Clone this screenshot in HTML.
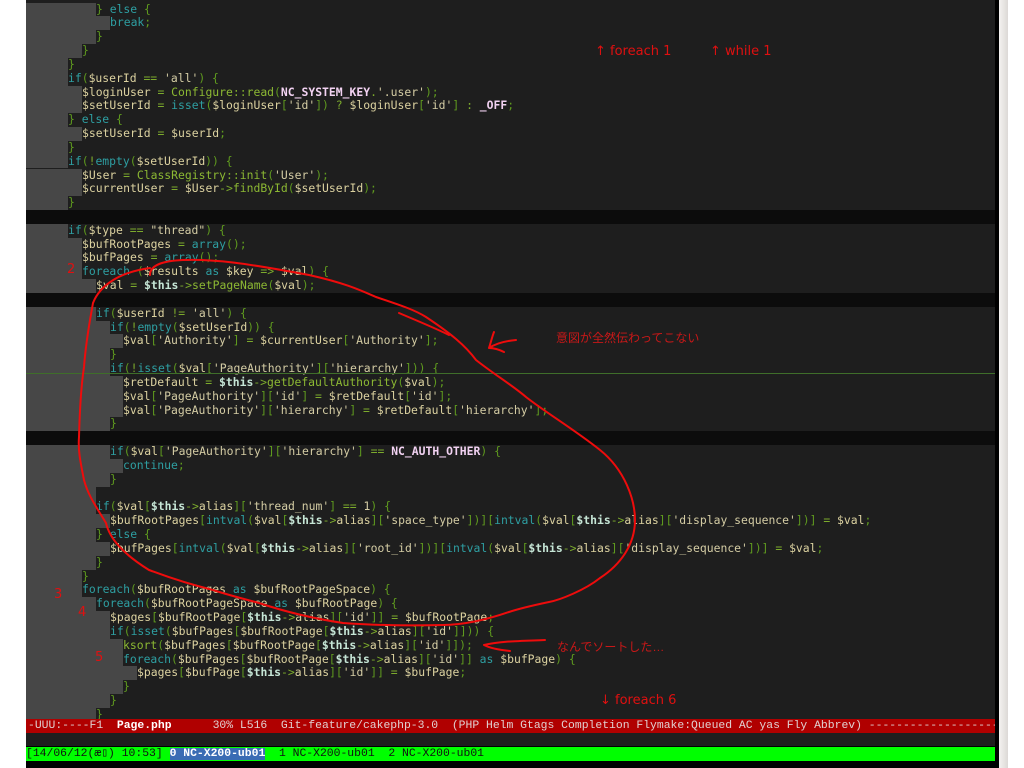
<!DOCTYPE html>
<html><head><meta charset="utf-8"><style>
*{margin:0;padding:0;box-sizing:border-box}
body{width:1024px;height:768px;background:#fff;position:relative;overflow:hidden}
#ed{position:absolute;left:26px;top:0;width:969px;height:768px;background:#1e1e1e}
#rb{position:absolute;left:995px;top:0;width:4px;height:768px;background:#000}
#sb{position:absolute;left:999px;top:0;width:9px;height:768px;background:linear-gradient(90deg,#f4f2f0,#dcd9d6)}
.l{position:absolute;left:26px;width:969px;height:14px;font:11.4px/13.83px "DejaVu Sans Mono",monospace;color:#d8cf9e;white-space:pre;padding-top:0}
.l .g{display:inline-block;height:13.83px;vertical-align:top;background:#474747}
.bk{background:#0c0c0c}
.k{color:#2e9fa2}.v{color:#dcd2a0}.s{color:#d4cca4}.p{color:#5f9a1e}.o{color:#7caa2c}.f{color:#8cb833}.c{color:#f2d2f2;font-weight:bold}.t{color:#c6e6d6;font-weight:bold}
.a{position:absolute;color:#e01010;font:13px "DejaVu Sans",sans-serif;white-space:nowrap}
.j{position:absolute;color:#c81818;font:12px "Liberation Sans","Noto Sans CJK JP",sans-serif;white-space:nowrap}
#ml{position:absolute;left:26px;top:719px;width:969px;height:14px;background:#b00000;color:#e0d0d0;font:11.4px/14px "Liberation Mono",monospace;white-space:pre;padding-left:2px;overflow:hidden}
#ml b{color:#fff}
#ml2{position:absolute;left:26px;top:733px;width:961px;height:13px;background:#1e1e1e}
#blk{position:absolute;left:26px;top:746px;width:969px;height:22px;background:#000}
#st{position:absolute;left:26px;top:747px;width:969px;height:14px;background:#00ff00;color:#111;font:11.4px/14px "Liberation Mono","Noto Sans CJK JP",monospace;white-space:pre;overflow:hidden}
#st span{background:#3a6cb4;color:#fff;font-weight:bold}
#code{position:absolute;left:0;top:1.5px;width:1024px;height:720px}
</style></head><body>
<div id="ed"></div>
<div id="rb"></div><div id="sb"></div>
<div id="code">
<div class="l" style="top:1px"><span class="g" style="width:70px"></span><span class="p">} </span><span class="k">else</span><span class="p"> {</span></div>
<div class="l" style="top:14.8px"><span class="g" style="width:84px"></span><span class="k">break</span><span class="p">;</span></div>
<div class="l" style="top:28.7px"><span class="g" style="width:70px"></span><span class="p">}</span></div>
<div class="l" style="top:42.5px"><span class="g" style="width:56px"></span><span class="p">}</span></div>
<div class="l" style="top:56.3px"><span class="g" style="width:42px"></span><span class="p">}</span></div>
<div class="l" style="top:70.2px"><span class="g" style="width:42px"></span><span class="k">if</span><span class="p">(</span><span class="v">$userId</span> <span class="o">==</span> <span class="s">'all'</span><span class="p">) {</span></div>
<div class="l" style="top:84px"><span class="g" style="width:56px"></span><span class="v">$loginUser</span> <span class="o">=</span> <span class="f">Configure</span><span class="o">::</span><span class="f">read</span><span class="p">(</span><span class="c">NC_SYSTEM_KEY</span><span class="o">.</span><span class="s">'.user'</span><span class="p">);</span></div>
<div class="l" style="top:97.8px"><span class="g" style="width:56px"></span><span class="v">$setUserId</span> <span class="o">=</span> <span class="k">isset</span><span class="p">(</span><span class="v">$loginUser</span><span class="p">[</span><span class="s">'id'</span><span class="p">])</span> <span class="o">?</span> <span class="v">$loginUser</span><span class="p">[</span><span class="s">'id'</span><span class="p">]</span> <span class="o">:</span> <span class="c">_OFF</span><span class="p">;</span></div>
<div class="l" style="top:111.6px"><span class="g" style="width:42px"></span><span class="p">} </span><span class="k">else</span><span class="p"> {</span></div>
<div class="l" style="top:125.5px"><span class="g" style="width:56px"></span><span class="v">$setUserId</span> <span class="o">=</span> <span class="v">$userId</span><span class="p">;</span></div>
<div class="l" style="top:139.3px"><span class="g" style="width:42px"></span><span class="p">}</span></div>
<div class="l" style="top:153.1px"><span class="g" style="width:42px"></span><span class="k">if</span><span class="p">(</span><span class="o">!</span><span class="k">empty</span><span class="p">(</span><span class="v">$setUserId</span><span class="p">)) {</span></div>
<div class="l" style="top:167px"><span class="g" style="width:56px"></span><span class="v">$User</span> <span class="o">=</span> <span class="f">ClassRegistry</span><span class="o">::</span><span class="f">init</span><span class="p">(</span><span class="s">'User'</span><span class="p">);</span></div>
<div class="l" style="top:180.8px"><span class="g" style="width:56px"></span><span class="v">$currentUser</span> <span class="o">=</span> <span class="v">$User</span><span class="o">-&gt;</span><span class="f">findById</span><span class="p">(</span><span class="v">$setUserId</span><span class="p">);</span></div>
<div class="l" style="top:194.6px"><span class="g" style="width:42px"></span><span class="p">}</span></div>
<div class="l bk" style="top:208.5px"></div>
<div class="l" style="top:222.3px"><span class="g" style="width:42px"></span><span class="k">if</span><span class="p">(</span><span class="v">$type</span> <span class="o">==</span> <span class="s">"thread"</span><span class="p">) {</span></div>
<div class="l" style="top:236.1px"><span class="g" style="width:56px"></span><span class="v">$bufRootPages</span> <span class="o">=</span> <span class="k">array</span><span class="p">();</span></div>
<div class="l" style="top:249.9px"><span class="g" style="width:56px"></span><span class="v">$bufPages</span> <span class="o">=</span> <span class="k">array</span><span class="p">();</span></div>
<div class="l" style="top:263.8px"><span class="g" style="width:56px"></span><span class="k">foreach</span> <span class="p">(</span><span class="v">$results</span> <span class="k">as</span> <span class="v">$key</span> <span class="o">=&gt;</span> <span class="v">$val</span><span class="p">) {</span></div>
<div class="l" style="top:277.6px"><span class="g" style="width:70px"></span><span class="v">$val</span> <span class="o">=</span> <span class="t">$this</span><span class="o">-&gt;</span><span class="f">setPageName</span><span class="p">(</span><span class="v">$val</span><span class="p">);</span></div>
<div class="l bk" style="top:291.4px"></div>
<div class="l" style="top:305.3px"><span class="g" style="width:70px"></span><span class="k">if</span><span class="p">(</span><span class="v">$userId</span> <span class="o">!=</span> <span class="s">'all'</span><span class="p">) {</span></div>
<div class="l" style="top:319.1px"><span class="g" style="width:84px"></span><span class="k">if</span><span class="p">(</span><span class="o">!</span><span class="k">empty</span><span class="p">(</span><span class="v">$setUserId</span><span class="p">)) {</span></div>
<div class="l" style="top:332.9px"><span class="g" style="width:97px"></span><span class="v">$val</span><span class="p">[</span><span class="s">'Authority'</span><span class="p">]</span> <span class="o">=</span> <span class="v">$currentUser</span><span class="p">[</span><span class="s">'Authority'</span><span class="p">];</span></div>
<div class="l" style="top:346.8px"><span class="g" style="width:84px"></span><span class="p">}</span></div>
<div class="l" style="top:360.6px"><span class="g" style="width:84px"></span><span class="k">if</span><span class="p">(</span><span class="o">!</span><span class="k">isset</span><span class="p">(</span><span class="v">$val</span><span class="p">[</span><span class="s">'PageAuthority'</span><span class="p">][</span><span class="s">'hierarchy'</span><span class="p">])) {</span></div>
<div class="l" style="top:374.4px"><span class="g" style="width:97px"></span><span class="v">$retDefault</span> <span class="o">=</span> <span class="t">$this</span><span class="o">-&gt;</span><span class="f">getDefaultAuthority</span><span class="p">(</span><span class="v">$val</span><span class="p">);</span></div>
<div class="l" style="top:388.2px"><span class="g" style="width:97px"></span><span class="v">$val</span><span class="p">[</span><span class="s">'PageAuthority'</span><span class="p">][</span><span class="s">'id'</span><span class="p">]</span> <span class="o">=</span> <span class="v">$retDefault</span><span class="p">[</span><span class="s">'id'</span><span class="p">];</span></div>
<div class="l" style="top:402.1px"><span class="g" style="width:97px"></span><span class="v">$val</span><span class="p">[</span><span class="s">'PageAuthority'</span><span class="p">][</span><span class="s">'hierarchy'</span><span class="p">]</span> <span class="o">=</span> <span class="v">$retDefault</span><span class="p">[</span><span class="s">'hierarchy'</span><span class="p">];</span></div>
<div class="l" style="top:415.9px"><span class="g" style="width:84px"></span><span class="p">}</span></div>
<div class="l bk" style="top:429.7px"></div>
<div class="l" style="top:443.6px"><span class="g" style="width:84px"></span><span class="k">if</span><span class="p">(</span><span class="v">$val</span><span class="p">[</span><span class="s">'PageAuthority'</span><span class="p">][</span><span class="s">'hierarchy'</span><span class="p">]</span> <span class="o">==</span> <span class="c">NC_AUTH_OTHER</span><span class="p">) {</span></div>
<div class="l" style="top:457.4px"><span class="g" style="width:97px"></span><span class="k">continue</span><span class="p">;</span></div>
<div class="l" style="top:471.2px"><span class="g" style="width:84px"></span><span class="p">}</span></div>
<div class="l" style="top:485.1px"><span class="g" style="width:70px"></span></div>
<div class="l" style="top:498.9px"><span class="g" style="width:70px"></span><span class="k">if</span><span class="p">(</span><span class="v">$val</span><span class="p">[</span><span class="t">$this</span><span class="o">-&gt;</span><span class="v">alias</span><span class="p">][</span><span class="s">'thread_num'</span><span class="p">]</span> <span class="o">==</span> <span class="s">1</span><span class="p">) {</span></div>
<div class="l" style="top:512.7px"><span class="g" style="width:84px"></span><span class="v">$bufRootPages</span><span class="p">[</span><span class="k">intval</span><span class="p">(</span><span class="v">$val</span><span class="p">[</span><span class="t">$this</span><span class="o">-&gt;</span><span class="v">alias</span><span class="p">][</span><span class="s">'space_type'</span><span class="p">])][</span><span class="k">intval</span><span class="p">(</span><span class="v">$val</span><span class="p">[</span><span class="t">$this</span><span class="o">-&gt;</span><span class="v">alias</span><span class="p">][</span><span class="s">'display_sequence'</span><span class="p">])]</span> <span class="o">=</span> <span class="v">$val</span><span class="p">;</span></div>
<div class="l" style="top:526.6px"><span class="g" style="width:70px"></span><span class="p">} </span><span class="k">else</span><span class="p"> {</span></div>
<div class="l" style="top:540.4px"><span class="g" style="width:84px"></span><span class="v">$bufPages</span><span class="p">[</span><span class="k">intval</span><span class="p">(</span><span class="v">$val</span><span class="p">[</span><span class="t">$this</span><span class="o">-&gt;</span><span class="v">alias</span><span class="p">][</span><span class="s">'root_id'</span><span class="p">])][</span><span class="k">intval</span><span class="p">(</span><span class="v">$val</span><span class="p">[</span><span class="t">$this</span><span class="o">-&gt;</span><span class="v">alias</span><span class="p">][</span><span class="s">'display_sequence'</span><span class="p">])]</span> <span class="o">=</span> <span class="v">$val</span><span class="p">;</span></div>
<div class="l" style="top:554.2px"><span class="g" style="width:70px"></span><span class="p">}</span></div>
<div class="l" style="top:568.1px"><span class="g" style="width:56px"></span><span class="p">}</span></div>
<div class="l" style="top:581.9px"><span class="g" style="width:56px"></span><span class="k">foreach</span><span class="p">(</span><span class="v">$bufRootPages</span> <span class="k">as</span> <span class="v">$bufRootPageSpace</span><span class="p">) {</span></div>
<div class="l" style="top:595.7px"><span class="g" style="width:70px"></span><span class="k">foreach</span><span class="p">(</span><span class="v">$bufRootPageSpace</span> <span class="k">as</span> <span class="v">$bufRootPage</span><span class="p">) {</span></div>
<div class="l" style="top:609.5px"><span class="g" style="width:84px"></span><span class="v">$pages</span><span class="p">[</span><span class="v">$bufRootPage</span><span class="p">[</span><span class="t">$this</span><span class="o">-&gt;</span><span class="v">alias</span><span class="p">][</span><span class="s">'id'</span><span class="p">]]</span> <span class="o">=</span> <span class="v">$bufRootPage</span><span class="p">;</span></div>
<div class="l" style="top:623.4px"><span class="g" style="width:84px"></span><span class="k">if</span><span class="p">(</span><span class="k">isset</span><span class="p">(</span><span class="v">$bufPages</span><span class="p">[</span><span class="v">$bufRootPage</span><span class="p">[</span><span class="t">$this</span><span class="o">-&gt;</span><span class="v">alias</span><span class="p">][</span><span class="s">'id'</span><span class="p">]])) {</span></div>
<div class="l" style="top:637.2px"><span class="g" style="width:97px"></span><span class="f">ksort</span><span class="p">(</span><span class="v">$bufPages</span><span class="p">[</span><span class="v">$bufRootPage</span><span class="p">[</span><span class="t">$this</span><span class="o">-&gt;</span><span class="v">alias</span><span class="p">][</span><span class="s">'id'</span><span class="p">]]);</span></div>
<div class="l" style="top:651px"><span class="g" style="width:97px"></span><span class="k">foreach</span><span class="p">(</span><span class="v">$bufPages</span><span class="p">[</span><span class="v">$bufRootPage</span><span class="p">[</span><span class="t">$this</span><span class="o">-&gt;</span><span class="v">alias</span><span class="p">][</span><span class="s">'id'</span><span class="p">]]</span> <span class="k">as</span> <span class="v">$bufPage</span><span class="p">) {</span></div>
<div class="l" style="top:664.9px"><span class="g" style="width:111px"></span><span class="v">$pages</span><span class="p">[</span><span class="v">$bufPage</span><span class="p">[</span><span class="t">$this</span><span class="o">-&gt;</span><span class="v">alias</span><span class="p">][</span><span class="s">'id'</span><span class="p">]]</span> <span class="o">=</span> <span class="v">$bufPage</span><span class="p">;</span></div>
<div class="l" style="top:678.7px"><span class="g" style="width:97px"></span><span class="p">}</span></div>
<div class="l" style="top:692.5px"><span class="g" style="width:84px"></span><span class="p">}</span></div>
<div class="l" style="top:706.4px;height:11px;overflow:hidden"><span class="g" style="width:70px"></span><span class="p">}</span></div>
</div>
<div style="position:absolute;left:26px;top:373px;width:969px;height:1px;background:#3f6e2a"></div>

<div id="ml">-UUU:----F1  <b>Page.php</b>      30% L516  Git-feature/cakephp-3.0  (PHP Helm Gtags Completion Flymake:Queued AC yas Fly Abbrev) -------------------</div>
<div id="blk"></div>
<div id="ml2"></div>
<div id="st">[14/06/12(æ▯) 10:53] <span>0 NC-X200-ub01</span>  1 NC-X200-ub01  2 NC-X200-ub01</div>

<div class="a" style="left:595px;top:44px">↑ foreach 1</div>
<div class="a" style="left:710px;top:44px">↑ while 1</div>
<div class="a" style="left:600px;top:693px">↓ foreach 6</div>
<div class="j" style="left:556px;top:329px">意図が全然伝わってこない</div>
<div class="j" style="left:557px;top:638px">なんでソートした…</div>
<div class="a" style="left:67px;top:262px">2</div>
<div class="a" style="left:54px;top:587px">3</div>
<div class="a" style="left:78px;top:605px">4</div>
<div class="a" style="left:95px;top:650px">5</div>

<svg style="position:absolute;left:0;top:0" width="1024" height="768" fill="none" stroke="#ee0c0c" stroke-width="2" stroke-linecap="round" stroke-linejoin="round">
<path d="M150,275 C150,266 160,261 183,260 C215,259 245,263 309,275 C345,283 360,290 376,297 C400,305 415,310 426,317 C450,333 465,345 476,360 C495,375 512,385 526,397 C545,412 575,430 600,450 C625,470 635,500 635,520 C635,545 620,565 600,578 C585,590 560,600 549,602 C530,606 515,610 509,612 C480,622 460,625 443,625 C400,626 370,625 343,623 C310,618 280,610 259,603 C240,598 225,594 213,590 C180,582 160,574 149,570 C125,555 110,540 106,523 C95,505 88,495 84,480 C80,460 78,450 79,437 C80,400 82,380 84,367 C86,340 90,320 93,303 C100,285 120,272 150,268"/>
<path d="M399,313 C420,322 435,328 449,335"/>
<path d="M516,340 C505,341 495,344 489,348 M489,348 C491,342 492,337 494,332 M489,348 C495,348 500,350 504,352"/>
<path d="M545,640 C520,641 500,641 484,645 C490,648 500,650 510,651"/>
</svg>
</body></html>
